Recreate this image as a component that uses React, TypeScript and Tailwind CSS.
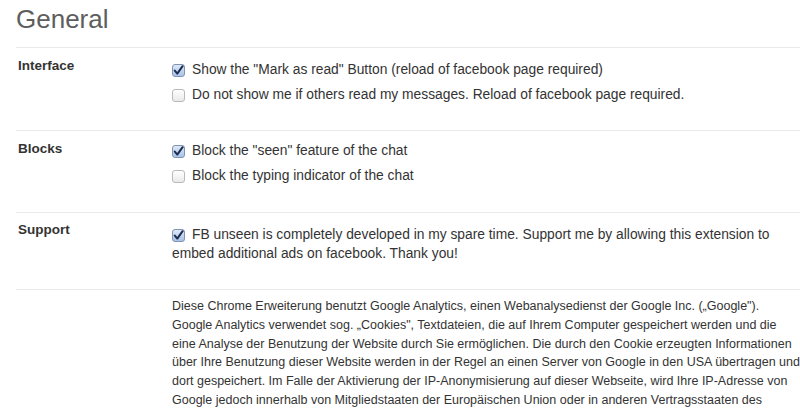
import React from "react";

function Box({ checked }: { checked: boolean }) {
  return (
    <span
      className={
        "inline-flex items-center justify-center w-[13px] h-[13px] rounded-[3px] border align-[-2px] mr-[7px] shrink-0 " +
        (checked
          ? "border-[#7f93b3] bg-gradient-to-b from-[#dfe9f7] to-[#a9c2e6]"
          : "border-[#b9b9b9] bg-gradient-to-b from-[#ffffff] to-[#e9e9e9]")
      }
    >
      {checked && (
        <svg width="11" height="11" viewBox="0 0 11 11">
          <path d="M1.8 5.6 L4.3 8.6 L9.6 1.2" fill="none" stroke="#1d2d52" strokeWidth="2" strokeLinecap="round" strokeLinejoin="round" />
        </svg>
      )}
    </span>
  );
}

function Option({ checked, children }: { checked: boolean; children: React.ReactNode }) {
  return (
    <div className="h-[25px] flex items-center text-[13.8px] text-[#333]">
      <Box checked={checked} />
      <span>{children}</span>
    </div>
  );
}

export default function App() {
  return (
    <div className="w-[800px] h-[413px] overflow-hidden bg-white pl-4 font-['Liberation_Sans',Arial,sans-serif]">
      <h1 className="text-[26px] leading-[30px] text-[#5e5e5e] pt-[4px] h-[47px]">General</h1>

      <section className="border-t border-[#e9e9e9] flex h-[83px]">
        <div className="w-[156px] pl-[2px] pt-[9px] text-[13.5px] font-bold text-[#333] leading-[18px]">Interface</div>
        <div className="pt-[10px]">
          <Option checked>Show the "Mark as read" Button (reload of facebook page required)</Option>
          <Option checked={false}>Do not show me if others read my messages. Reload of facebook page required.</Option>
        </div>
      </section>

      <section className="border-t border-[#e9e9e9] flex h-[82px]">
        <div className="w-[156px] pl-[2px] pt-[9px] text-[13.5px] font-bold text-[#333] leading-[18px]">Blocks</div>
        <div className="pt-[8px]">
          <Option checked>Block the "seen" feature of the chat</Option>
          <Option checked={false}>Block the typing indicator of the chat</Option>
        </div>
      </section>

      <section className="border-t border-[#e9e9e9] flex h-[77px]">
        <div className="w-[156px] pl-[2px] pt-[8px] text-[13.5px] font-bold text-[#333] leading-[18px]">Support</div>
        <div className="pt-[12px] w-[618px] text-[13.8px] text-[#333] leading-[19px]">
          <Box checked />
          FB unseen is completely developed in my spare time. Support me by allowing this extension to embed additional ads on facebook. Thank you!
        </div>
      </section>

      <section className="border-t border-[#e9e9e9] flex">
        <div className="w-[156px] shrink-0" />
        <p className="pt-[7px] w-[628px] shrink-0 text-[12.5px] text-[#333] leading-[18.8px]">
          Diese Chrome Erweiterung benutzt Google Analytics, einen Webanalysedienst der Google Inc. („Google"). Google Analytics verwendet sog. „Cookies", Textdateien, die auf Ihrem Computer gespeichert werden und die eine Analyse der Benutzung der Website durch Sie ermöglichen. Die durch den Cookie erzeugten Informationen über Ihre Benutzung dieser Website werden in der Regel an einen Server von Google in den USA übertragen und dort gespeichert. Im Falle der Aktivierung der IP-Anonymisierung auf dieser Webseite, wird Ihre IP-Adresse von Google jedoch innerhalb von Mitgliedstaaten der Europäischen Union oder in anderen Vertragsstaaten des Abkommens über den Europäischen Wirtschaftsraum zuvor gekürzt.
        </p>
      </section>
    </div>
  );
}
